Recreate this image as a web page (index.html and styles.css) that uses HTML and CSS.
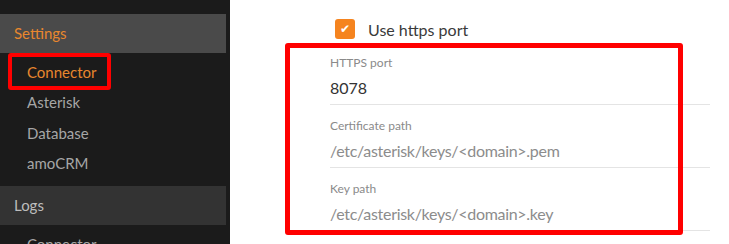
FILE: index.html
```html
<!DOCTYPE html>
<html>
<head>
<meta charset="utf-8">
<link rel="stylesheet" href="styles.css">
</head>
<body>
<div class="app">
  <nav class="sidebar">
    <div class="group-head active">Settings</div>
    <ul class="items">
      <li class="item current"><span class="mark mark-nav"></span>Connector</li>
      <li class="item">Asterisk</li>
      <li class="item">Database</li>
      <li class="item">amoCRM</li>
    </ul>
    <div class="group-head">Logs</div>
    <ul class="items">
      <li class="item">Connector</li>
    </ul>
  </nav>
  <main class="main">
    <label class="check-row">
      <span class="checkbox">✔</span>
      <span class="check-label">Use https port</span>
    </label>
    <div class="fields">
      <span class="mark mark-fields"></span>
      <div class="field">
        <div class="field-label">HTTPS port</div>
        <div class="field-value">8078</div>
      </div>
      <div class="field">
        <div class="field-label">Certificate path</div>
        <div class="field-value placeholder">/etc/asterisk/keys/&lt;domain&gt;.pem</div>
      </div>
      <div class="field">
        <div class="field-label">Key path</div>
        <div class="field-value placeholder">/etc/asterisk/keys/&lt;domain&gt;.key</div>
      </div>
    </div>
  </main>
</div>
</body>
</html>
```

FILE: styles.css
```css
* { box-sizing: border-box; }
html, body { margin: 0; padding: 0; height: 100%; overflow: hidden; }
body { font-family: Lato, "Open Sans", sans-serif; background: #fff; }

.app { display: flex; height: 244px; overflow: hidden; }

.sidebar {
  width: 230px;
  flex: none;
  background: #1b1b1b;
  padding-top: 14px;
}
.group-head {
  width: 226px;
  height: 39px;
  line-height: 39px;
  padding-left: 14px;
  font-size: 15px;
  color: #bdbdbd;
  background: #333333;
}
.group-head.active { background: #4a4a4a; color: #e8872e; }

.items { list-style: none; margin: 0; padding: 3.5px 0 7.5px; }
.item {
  position: relative;
  height: 30.5px;
  line-height: 30.5px;
  padding-left: 27px;
  font-size: 15px;
  color: #a6a6a6;
}
.item.current { color: #e8872e; }

.mark {
  position: absolute;
  border: 4.5px solid #ff0000;
  border-radius: 3px;
  pointer-events: none;
}
.mark-nav { left: 8px; top: -4px; width: 103px; height: 37px; }

.main { flex: 1; padding: 19px 0 0 100px; }

.check-row { display: flex; align-items: center; height: 20px; padding-left: 5px; }
.checkbox {
  width: 20px; height: 20px;
  border-radius: 3px;
  background: #f5841f;
  color: #fff;
  font-size: 12px;
  line-height: 20px;
  text-align: center;
  font-family: "DejaVu Sans", sans-serif;
}
.check-label { margin-left: 13px; font-size: 16px; color: #3a3a3a; }

.fields { position: relative; width: 380px; margin-top: 3px; }
.mark-fields { left: -45px; top: 1px; width: 398px; height: 192px; border-width: 5px; }

.field {
  padding: 14px 0 3px;
  border-bottom: 1px solid #e4e4e4;
}
.field-label { font-size: 12px; line-height: 14px; color: #8a8a8a; }
.field-value { margin-top: 6px; font-size: 16px; line-height: 24px; color: #333; }
.field-value.placeholder { color: #8c8c8c; letter-spacing: -0.3px; }
.field:first-of-type .field-value, .field-value { padding-bottom: 1px; }
```
